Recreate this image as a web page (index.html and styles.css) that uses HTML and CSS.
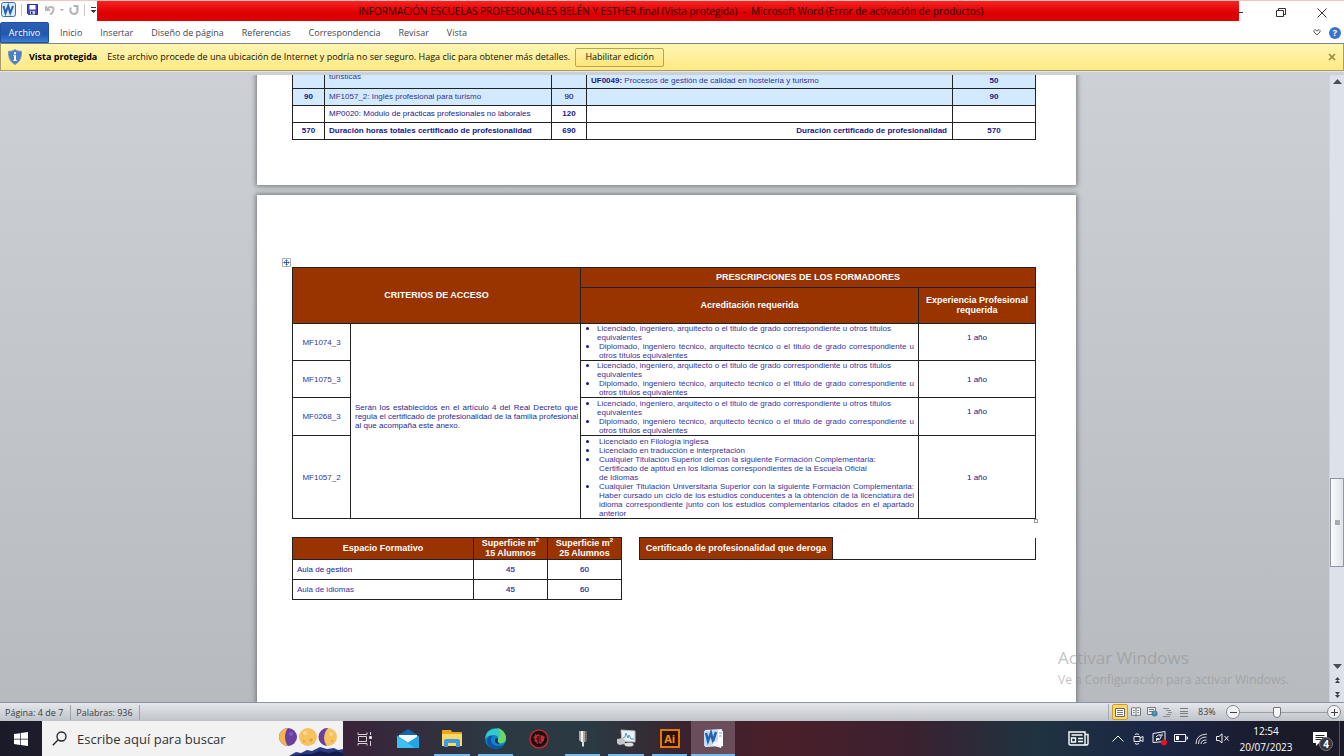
FILE: index.html
```html
<!DOCTYPE html>
<html lang="es">
<head>
<meta charset="utf-8">
<meta name="viewport" content="width=device-width, initial-scale=1">
<title>INFORMACIÓN ESCUELAS PROFESIONALES BELÉN Y ESTHER.final - Microsoft Word</title>
<link rel="stylesheet" href="styles.css">
</head>
<body>
<div class="app">
  <header class="titlebar">
    <div class="quick">
      <svg class="word-logo" width="15" height="15" viewBox="0 0 15 15"><rect x=".5" y=".5" width="14" height="14" rx="2" fill="#dcebfa" stroke="#3c6fb5"/><path d="M2.500 4l2 7 2.700-7 2 7L12 4" fill="none" stroke="#1f5fb4" stroke-width="2"/></svg>
      <i class="vsep"></i>
      <button class="icon-btn" aria-label="Guardar"><svg width="11" height="11" viewBox="0 0 11 11"><path d="M.5.5h10v10h-9l-1-1z" fill="#4a4ac0" stroke="#28289a"/><path d="M2.500 1h6v4.500h-6z" fill="#fff"/><path d="M3 7h5v3.500H3z" fill="#c8d0ee"/><path d="M4 7.500h1.500v2.500H4z" fill="#222280"/></svg></button>
      <button class="icon-btn undo" aria-label="Deshacer"><svg width="10" height="10" viewBox="0 0 10 10" fill="none" stroke="#b4b7bc" stroke-width="2"><path d="M1 1v4h4M1.500 4.500C4 1 9 1 8.500 5 8.300 7 7 8.500 5 9.500"/></svg></button>
      <i class="caret"></i>
      <button class="icon-btn redo" aria-label="Rehacer"><svg width="10" height="10" viewBox="0 0 10 10" fill="none" stroke="#b0b3b8" stroke-width="2"><path d="M2 2.500C.5 5 1.500 9 5 9s4.500-4 2.500-6.500M4.500 1h4v3"/></svg></button>
      <i class="vsep"></i>
      <svg width="7" height="8" viewBox="0 0 7 8"><path d="M1 1h5v1H1zM.5 4h6l-3 3z" fill="#333"/></svg>
    </div>
    <h1 class="title">INFORMACIÓN ESCUELAS PROFESIONALES BELÉN Y ESTHER.final (Vista protegida)&nbsp; -&nbsp; Microsoft Word (Error de activación de productos)</h1>
    <div class="window-buttons">
      <button class="min" aria-label="Minimizar"><svg width="4" height="10" viewBox="0 0 4 10"><path d="M0 4.500h4" stroke="#333"/></svg></button>
      <button aria-label="Restaurar"><svg width="10" height="10" viewBox="0 0 10 10" fill="none" stroke="#333"><path d="M.5 2.500h7v6h-7zM2.500 2V.500h7v6H8"/></svg></button>
      <button aria-label="Cerrar"><svg width="10" height="10" viewBox="0 0 10 10" stroke="#333"><path d="M.5.5l9 9M9.500.5l-9 9"/></svg></button>
    </div>
  </header>

  <nav class="ribbon">
    <button class="tab file">Archivo</button>
    <button class="tab">Inicio</button>
    <button class="tab">Insertar</button>
    <button class="tab">Diseño de página</button>
    <button class="tab">Referencias</button>
    <button class="tab">Correspondencia</button>
    <button class="tab">Revisar</button>
    <button class="tab">Vista</button>
    <div class="ribbon-end">
      <button class="icon-btn" aria-label="Expandir la cinta"><svg width="8" height="7" viewBox="0 0 8 7" fill="#fff" stroke="#5a6068"><path d="M1 1.500l1-1 2 1.500 2-1.500 1 1v1.500L4 6 1 3z"/></svg></button>
      <button class="help" aria-label="Ayuda">?</button>
    </div>
  </nav>

  <section class="protected">
    <svg width="14" height="16" viewBox="0 0 14 16"><path d="M7 .5C9 2 11 2.300 13.500 2.300 13.800 8 12 13 7 15.500 2 13 .2 8 .5 2.300 3 2.300 5 2 7 .5z" fill="#4a80c4" stroke="#7e97b8"/><path d="M6 3.200h2v2H6zM5.200 6.200H8v5h1V12H5v-.8h1V7h-.8z" fill="#fff"/></svg>
    <strong>Vista protegida</strong>
    <span>Este archivo procede de una ubicación de Internet y podría no ser seguro. Haga clic para obtener más detalles.</span>
    <button class="enable">Habilitar edición</button>
    <button class="icon-btn dismiss" aria-label="Cerrar aviso"><svg width="8" height="8" viewBox="0 0 8 8" stroke="#96893c" stroke-width="1.600"><path d="M1 1l6 6M7 1L1 7"/></svg></button>
  </section>

  <div class="workspace">
    <main class="canvas">
      <article class="page first">
        <table class="grid hours">
          <colgroup><col class="h1"><col class="h2"><col class="h3"><col class="h4"><col class="h5"></colgroup>
          <tr class="blue clipped"><td></td><td class="l low">turísticas</td><td></td><td class="l low"><b>UF0049:</b> Procesos de gestión de calidad en hostelería y turismo</td><td class="low"><b>50</b></td></tr>
          <tr class="blue"><td><b>90</b></td><td class="l">MF1057_2: Inglés profesional para turismo</td><td class="semi">90</td><td></td><td><b>90</b></td></tr>
          <tr><td></td><td class="l dark">MP0020: Módulo de prácticas profesionales no laborales</td><td><b>120</b></td><td></td><td></td></tr>
          <tr><td><b>570</b></td><td class="l"><b>Duración horas totales certificado de profesionalidad</b></td><td><b>690</b></td><td class="r"><b>Duración certificado de profesionalidad</b></td><td><b>570</b></td></tr>
        </table>
      </article>

      <article class="page second">
        <div class="criteria-wrap">
          <svg class="move" width="9" height="9" viewBox="0 0 9 9"><path d="M.5.5h8v8h-8z" fill="#fff" stroke="#a8adb8"/><path d="M4.500 1.500v6M1.500 4.500h6M3.500 2.500h2M3.500 6.500h2M2.500 3.500v2M6.500 3.500v2" stroke="#3a5fb0"/></svg>
          <table class="grid criteria">
            <colgroup><col class="c1"><col class="c2"><col class="c3"><col class="c4"></colgroup>
            <tr class="head-a"><th colspan="2" rowspan="2">CRITERIOS DE ACCESO</th><th colspan="2">PRESCRIPCIONES DE LOS FORMADORES</th></tr>
            <tr class="head-b"><th>Acreditación requerida</th><th>Experiencia Profesional requerida</th></tr>
            <tr class="module"><td>MF1074_3</td>
              <td rowspan="4" class="access"><p class="wide">Serán los establecidos en el artículo 4 del Real Decreto que</p><p class="wide">regula el certificado de profesionalidad de la familia profesional</p><p>al que acompaña este anexo.</p></td>
              <td class="reqs"><ul><li class="near"><p class="mid">Licenciado, ingeniero, arquitecto o el titulo de grado correspondiente u otros títulos</p><p>equivalentes</p></li><li><p class="wide">Diplomado, ingeniero técnico, arquitecto técnico o el titulo de grado correspondiente u</p><p>otros títulos equivalentes</p></li></ul></td>
              <td class="years up">1 año</td></tr>
            <tr class="module"><td>MF1075_3</td>
              <td class="reqs"><ul><li class="near"><p class="mid">Licenciado, ingeniero, arquitecto o el titulo de grado correspondiente u otros títulos</p><p>equivalentes</p></li><li><p class="wide">Diplomado, ingeniero técnico, arquitecto técnico o el titulo de grado correspondiente u</p><p>otros títulos equivalentes</p></li></ul></td>
              <td class="years">1 año</td></tr>
            <tr class="module third"><td>MF0268_3</td>
              <td class="reqs"><ul><li class="near"><p class="mid">Licenciado, ingeniero, arquitecto o el titulo de grado correspondiente u otros títulos</p><p>equivalentes</p></li><li><p class="wide">Diplomado, ingeniero técnico, arquitecto técnico o el titulo de grado correspondiente u</p><p>otros títulos equivalentes</p></li></ul></td>
              <td class="years up">1 año</td></tr>
            <tr class="module last"><td>MF1057_2</td>
              <td class="reqs"><ul><li><p>Licenciado en Filología inglesa</p></li><li><p>Licenciado en traducción e interpretación</p></li><li><p>Cualquier Titulación Superior del con la siguiente Formación Complementaria:</p><p>Certificado de aptitud en los Idiomas correspondientes de la Escuela Oficial</p><p>de Idiomas</p></li><li><p class="wide">Cualquier Titulación Universitaria Superior con la siguiente Formación Complementaria:</p><p class="wide">Haber cursado un ciclo de los estudios conducentes a la obtención de la licenciatura del</p><p class="wide">idioma correspondiente junto con los estudios complementarios citados en el apartado</p><p>anterior</p></li></ul></td>
              <td class="years">1 año</td></tr>
          </table>
          <i class="resize"></i>
        </div>
        <div class="lower">
          <table class="grid rooms">
            <colgroup><col class="r1"><col class="r2"><col class="r3"></colgroup>
            <tr class="room-head"><th>Espacio Formativo</th><th>Superficie m<sup>2</sup><br>15 Alumnos</th><th>Superficie m<sup>2</sup><br>25 Alumnos</th></tr>
            <tr><td class="l strong">Aula de gestión</td><td class="semi">45</td><td class="semi">60</td></tr>
            <tr><td class="l">Aula de idiomas</td><td class="semi">45</td><td class="semi">60</td></tr>
          </table>
          <table class="grid repeal">
            <colgroup><col class="p1"><col class="p2"></colgroup>
            <tr class="room-head"><th>Certificado de profesionalidad que deroga</th><td class="blank"></td></tr>
          </table>
        </div>
      </article>
    </main>
    <aside class="scrollbar">
      <button aria-label="Subir"><svg width="9" height="5" viewBox="0 0 9 5"><path d="M0 5h9L4.500 0z" fill="#4a4f57"/></svg></button>
      <div class="track"><div class="space-above"></div><div class="thumb"><i></i></div><div class="space-below"></div></div>
      <button aria-label="Bajar"><svg width="9" height="5" viewBox="0 0 9 5"><path d="M0 0h9L4.500 5z" fill="#4a4f57"/></svg></button>
      <button class="jump" aria-label="Página anterior"><svg width="5" height="6" viewBox="0 0 5 6"><path d="M0 3h5L2.500 0zM0 6h5L2.500 3z" fill="#3c4048"/></svg></button>
      <button class="jump" aria-label="Página siguiente"><svg width="5" height="6" viewBox="0 0 5 6"><path d="M0 0h5L2.500 3zM0 3h5L2.500 6z" fill="#3c4048"/></svg></button>
    </aside>
    <div class="watermark"><p class="big">Activar Windows</p><p>Ve a Configuración para activar Windows.</p></div>
  </div>

  <footer class="status">
    <span class="stat page-count">Página: 4 de 7</span>
    <span class="stat">Palabras: 936</span>
    <div class="views">
      <button class="on" aria-label="Diseño de impresión"><svg width="10" height="9" viewBox="0 0 10 9"><path d="M.5.5h9v8h-9z" fill="#fff" stroke="#666"/><path d="M2 2.500h6M2 4.500h6M2 6.500h6" stroke="#777"/></svg></button>
      <button aria-label="Lectura"><svg width="10" height="10" viewBox="0 0 10 10" fill="#f4f5f6" stroke="#70757b"><path d="M5 1.500C4 .5 2 .5.500 1v7.500c1.500-.5 3-.5 4.500.5 1.500-1 3-1 4.500-.5V1C8 .5 6 .5 5 1.500V9M2 3.500h1.500M2 5.500h1.500M6.500 3.500H8M6.500 5.500H8"/></svg></button>
      <button aria-label="Diseño web"><svg width="11" height="10" viewBox="0 0 11 10"><path d="M.5.5h8v7h-8z" fill="#eee" stroke="#777"/><path d="M2 2.500h5M2 4.500h4" stroke="#777"/><circle cx="7.500" cy="6.500" r="3" fill="#3b7fb8"/><path d="M6 6l2-2 1 2-2 2z" fill="#58b368"/></svg></button>
      <button aria-label="Esquema"><svg width="10" height="9" viewBox="0 0 10 9" stroke="#8a8f95" fill="none"><path d="M0 .5h6M3 2.500h5M5 4.500h4M3 6.500h5M0 8.500h7"/></svg></button>
      <button aria-label="Borrador"><svg width="10" height="9" viewBox="0 0 10 9" stroke="#777c82"><path d="M1 .5h8M1 3.500h8M1 5.500h8M1 8.500h8"/></svg></button>
    </div>
    <span class="percent">83%</span>
    <button class="round" aria-label="Alejar"><svg width="7" height="7" viewBox="0 0 7 7" stroke="#444"><path d="M0 3.500h7"/></svg></button>
    <input class="zoom" type="range" min="0" max="100" value="42" aria-label="Zoom">
    <button class="round" aria-label="Acercar"><svg width="7" height="7" viewBox="0 0 7 7" stroke="#444"><path d="M0 3.500h7M3.500 0v7"/></svg></button>
  </footer>

  <div class="taskbar">
    <button class="start" aria-label="Inicio de Windows"><svg width="14" height="14" viewBox="0 0 14 14" fill="#fff"><path d="M0 2l6-.8v5.500H0zM6.700 1.100L14 0v6.700H6.700zM0 7.400h6v5.500L0 12zM6.700 7.400H14V14l-7.300-1z"/></svg></button>
    <div class="search">
      <svg width="15" height="15" viewBox="0 0 15 15" fill="none" stroke="#222" stroke-width="1.300"><circle cx="9.500" cy="5.500" r="4.500"/><path d="M6.200 8.800L.8 14.200"/></svg>
      <input type="text" placeholder="Escribe aquí para buscar" aria-label="Escribe aquí para buscar">
      <svg class="moons" width="64" height="34" viewBox="0 0 64 34">
        <circle cx="9" cy="15" r="9" fill="#6a3fa0"/><path d="M9 6a9 9 0 0 0 0 18C5 19 5 11 9 6z" fill="#f3b451"/><circle cx="12" cy="12" r="2" fill="#8458bb"/>
        <circle cx="29" cy="15" r="9" fill="#f6c25d"/><circle cx="26" cy="11" r="2" fill="#fbdc8c"/><circle cx="32" cy="18" r="1.500" fill="#df9d40"/><circle cx="25" cy="19" r="1" fill="#df9d40"/>
        <circle cx="49" cy="15" r="9" fill="#f6c25d"/><path d="M49 6a9 9 0 0 0-1 18c-3-4-5-11 1-18z" fill="#6a3fa0"/><circle cx="52" cy="12" r="2" fill="#fbdc8c"/><circle cx="53" cy="19" r="1" fill="#df9d40"/>
        <path d="M10 34l7-4 5 1 6-3 5 1 8-4 7 2 7-1 4 2 5-1v7z" fill="#2b3c86"/><path d="M13 34l12-2 7 0 9-3 9 2 7-2 7 2v3z" fill="#141c4e"/>
      </svg>
    </div>
    <nav class="apps">
      <button aria-label="Vista de tareas"><svg width="16" height="14" viewBox="0 0 16 14" fill="none" stroke="#d8d0d6"><path d="M1 .5v2h9v-2M1.500 4.500h8v5h-8zM1 13.500v-2h9v2M13.500 0v3M13.500 9v5"/><path d="M12.500 4.500h2v2h-2z" fill="#fff"/></svg></button>
      <button aria-label="Correo"><svg width="22" height="19" viewBox="0 0 22 19"><path d="M0 7L11 0l11 7v3H0z" fill="#1565a9"/><path d="M2 6h18v8H2z" fill="#f4f6f8"/><path d="M0 6.500l11 7 11-7V19H0z" fill="#24a5e6"/><path d="M0 19V7l18 12z" fill="#3cc0f5"/></svg></button>
      <button class="open" aria-label="Explorador"><svg width="20" height="17" viewBox="0 0 20 17"><path d="M0 1q0-1 1-1h8l1 2h9q1 0 1 1v12H0z" fill="#e8a51e"/><path d="M0 4h20v12H0z" fill="#ffd766"/><path d="M2 17v-6q0-2 2-2h12q2 0 2 2v6h-4v-4H6v4z" fill="#3f9be0"/></svg></button>
      <button class="open" aria-label="Edge"><svg width="21" height="21" viewBox="0 0 21 21"><circle cx="10.500" cy="10.500" r="10.500" fill="#1580d0"/><path d="M.5 9C2-1 18-3 21 9c1 5-3 7-7 6-2-.5-2-1.500-1-3 1.500-3-1-5-4-5-4 0-7 1-8.500 4z" fill="#36c8c6"/><path d="M12 0c6 1 9 6 9 11-1 4-4 5-7 4-2-.6-2-2-1-3 1-4 5-7-1-12z" fill="#6bd66b"/><path d="M8 8c-4 3-2 10 5 10 3 0 5-1 6-2-5 8-17 5-17-3 0-4 3-6 6-5z" fill="#0d559f"/><path d="M13 12c-1 2 0 3 2 3l-2 1c-3-1-4-4-2-6 2 0 2 1 2 2z" fill="#17364a"/></svg></button>
      <button aria-label="Driver"><svg width="20" height="20" viewBox="0 0 20 20"><circle cx="10" cy="10" r="9" fill="#171116" stroke="#bd272d" stroke-width="1.500"/><path d="M4 8l2-1V5l2 1 2-1 1 2 2-1 3 2-1 2v2l-2 1-1 2-2-1-2 1-1-2-2-1 1-2z" fill="#c5282e"/><path d="M8 8h4M7 10h5M9 12h3M9 7v7" stroke="#241116"/></svg></button>
      <button class="open" aria-label="Plotter"><svg width="10" height="18" viewBox="0 0 10 18"><path d="M1 1h8v9L7 12H3L1 10z" fill="#aaa9a6"/><path d="M3 1h2v11H3z" fill="#f2f2ef"/><path d="M7 1h2v9L7 12z" fill="#686a6a"/><path d="M4 12h2v4l-1 1-1-1z" fill="#ddd"/></svg></button>
      <button class="open" aria-label="Monitor"><svg width="20" height="19" viewBox="0 0 20 19"><path d="M5 1l14 1v11L6 12z" fill="#edf1f3" stroke="#b7bec3"/><path d="M7 9l2-1 1-4 2 5 1-3 2 4h3" fill="none" stroke="#4f9bc2"/><path d="M1 10l6-1 2 2v4l-6 1-2-2z" fill="#c5c8ca"/><ellipse cx="13" cy="15.500" rx="4.500" ry="2" fill="#dadddd"/></svg></button>
      <button class="open" aria-label="Illustrator"><span class="ai">Ai</span></button>
      <button class="open active" aria-label="Word"><svg width="21" height="20" viewBox="0 0 21 20"><path d="M2 1l17-1v17L2 18z" fill="#e3effb"/><path d="M14 1l6 1v15l-6 1z" fill="#fff"/><path d="M1 2l14-1v15L1 17z" fill="#c4dbf3"/><path d="M3 4l2 8 3-8 2 8 3-9" fill="none" stroke="#2563ae" stroke-width="2.500"/><path d="M10 13l10-2-2 8-9-3z" fill="#f5f8fc"/><path d="M16 4h3M16 7h3" stroke="#7aa8d8"/></svg></button>
    </nav>
    <div class="tray">
      <button class="news" aria-label="Noticias"><svg width="21" height="15" viewBox="0 0 21 15" fill="none" stroke="#fff" stroke-width="1.400"><path d="M1 1h16v13H2.500Q1 14 1 12.500zM17 3.500h3v9Q20 14 18.500 14H16M3.500 4h11M3.500 7h4v4h-4zM10 7.500h5M10 10.500h5"/></svg></button>
      <button aria-label="Mostrar iconos"><svg width="12" height="7" viewBox="0 0 12 7" fill="none" stroke="#fff"><path d="M.5 6.500L6 1l5.500 5.500"/></svg></button>
      <button aria-label="Reunirse"><svg width="11" height="12" viewBox="0 0 11 12" fill="none" stroke="#eee"><path d="M1 3.500h6v5H1zM7 5l3-1.500v5L7 7M2 1.500Q4 0 6 1.500M2 10.500q2 1.500 4 0"/></svg></button>
      <button aria-label="Actualización"><svg width="16" height="15" viewBox="0 0 16 15" fill="none" stroke="#eee"><path d="M1 2.500l12-2v10L1 11.500zM4 6q2-3 5-2M10 2.500V5H7.500M9 6q-1 4-4 2.500M4.500 10V7.500H7"/><circle cx="12" cy="11.500" r="3" fill="#e81123" stroke="none"/></svg></button>
      <button aria-label="Batería"><svg width="14" height="9" viewBox="0 0 14 9" fill="none" stroke="#eee"><path d="M.5.5h11v7H.5zM12 3h1.500v2H12"/><path d="M2 2h3v4H2z" fill="#fff" stroke="none"/></svg></button>
      <button aria-label="Red"><svg width="13" height="12" viewBox="0 0 13 12" fill="none" stroke="#ddd"><path d="M1 11Q1 1.500 12 1M3.500 11q0-7 8-7M6 11q0-4 5.500-4M8.500 11q0-1.500 3-1.500"/></svg></button>
      <button aria-label="Volumen"><svg width="14" height="11" viewBox="0 0 14 11" fill="none" stroke="#eee"><path d="M.5 3.500H3L6 .8v9L3 7.500H.5zM8.500 3l4 4.500M12.500 3l-4 4.500"/></svg></button>
      <time class="clock"><span>12:54</span><span>20/07/2023</span></time>
      <button class="notes" aria-label="Notificaciones"><svg width="16" height="16" viewBox="0 0 16 16"><path d="M1 1h14v11H7l-3 3v-3H1z" fill="#fff"/><path d="M3.500 4.500h9M3.500 6.500h9M3.500 8.500h6" stroke="#252532"/></svg><b class="badge">4</b></button>
      <i class="desktop-edge"></i>
    </div>
  </div>
</div>
</body>
</html>
```
FILE: styles.css
```css
* { box-sizing: border-box; }
body { margin: 0; font: 11px/14px "Open Sans", "Noto Sans", sans-serif; color: #222; }
button { margin: 0; padding: 0; border: 0; background: none; font: inherit; color: inherit; display: flex; align-items: center; justify-content: center; }
p, h1, ul { margin: 0; padding: 0; }
svg { display: block; flex: none; }
.app { display: flex; flex-direction: column; height: 100vh; min-height: 480px; overflow: hidden; background: #fff; }

/* Title bar */
.titlebar { display: flex; height: 22px; flex: none; border-top: 1px solid #f3c4c0; }
.quick { display: flex; align-items: center; gap: 5px; width: 97px; height: 17px; padding-left: 1px; }
.vsep { width: 1px; height: 12px; background: #c8c8cc; }
.icon-btn.undo { margin-left: 2px; }
.caret { border: 2px solid transparent; border-top-color: #aaa; border-bottom: 0; }
.title { flex: 1; height: 20px; padding-left: 6px; background: linear-gradient(#fb2222, #dc0000 60%, #e00000); color: #2e0000; font-size: 10px; line-height: 20px; font-weight: 400; text-align: center; white-space: nowrap; overflow: hidden; }
.window-buttons { display: flex; width: 105px; height: 22px; padding-top: 2px; }
.window-buttons button { width: 41px; }
.window-buttons .min { width: 21px; justify-content: flex-start; }

/* Ribbon */
.ribbon { display: flex; height: 21px; flex: none; font-size: 9px; color: #44474c; }
.tab { padding: 0 9px; white-space: nowrap; }
.file { width: 49px; margin-right: 2px; padding: 0; background: linear-gradient(#2a5fb8, #2458ad 60%, #3a7fd8); border: 1px solid #1f4f9f; border-radius: 2px 2px 0 0; color: #fff; }
.ribbon-end { display: flex; align-items: center; gap: 8px; margin-left: auto; padding-right: 3px; }
.help { width: 12px; height: 12px; border-radius: 50%; background: #3e74c8; color: #fff; font-size: 9px; line-height: 12px; font-weight: 700; }

/* Protected view notice */
.protected { display: flex; align-items: center; height: 28px; flex: none; padding: 0 7px; border: 1px solid #a89d68; border-top-color: #81837c; background: linear-gradient(#fff6b4, #ffe982); font-size: 9px; color: #111; white-space: nowrap; }
.protected strong { margin-left: 7px; color: #000; }
.protected span { margin-left: 10px; }
.enable { height: 19px; width: 89px; margin-left: 5px; border: 1px solid #b8a44d; border-radius: 2px; background: linear-gradient(#fff3a8, #ffe67a); }
.dismiss { margin-left: auto; }

/* Document area */
.workspace { position: relative; display: flex; flex: 1; min-height: 0; padding-top: 3px; border-top: 1px solid #e2e4e8; background: linear-gradient(#cdd0d4, #b7babe); }
.canvas { flex: 1; min-width: 0; overflow: hidden; padding-left: 4px; display: flex; flex-direction: column; align-items: center; gap: 10px; }
.page { width: 819px; max-width: 100%; flex: none; padding: 0 40px 0 35px; background: #fff; box-shadow: 0 0 5px 1px #6f757b; }
.first { margin-top: -11px; padding-bottom: 45px; }
.second { padding-top: 72px; padding-bottom: 120px; }

.grid { width: 100%; border-collapse: collapse; table-layout: fixed; font: 8px/9px "Liberation Sans", Arial, sans-serif; color: #34349c; text-align: center; }
.grid td, .grid th { padding: 0 4px; border: 1px solid #222; }
.grid th { padding-bottom: 2px; background: #993300; color: #fff; font-size: 9px; line-height: 10px; }
.grid b { color: #17178a; }
.grid .l { text-align: left; }
.grid .r { padding-right: 5px; text-align: right; }
.grid .dark, .grid .strong { color: #17178a; }
.grid .semi { color: #2a2a94; -webkit-text-stroke: 0.2px; }

.hours tr { height: 17px; }
.hours .clipped { height: 24px; }
.grid.hours td { padding-bottom: 2px; }
.grid.hours .low { vertical-align: bottom; padding-bottom: 3px; }
.grid.hours .clipped .l:nth-child(2) { padding-bottom: 7px; }
.blue td { background: #d3e9fe; }
.h1 { width: 32px; } .h2 { width: 227px; } .h3 { width: 35px; } .h5 { width: 83px; }

.criteria-wrap { position: relative; }
.move { position: absolute; left: -10px; top: -9px; }
.resize { position: absolute; right: -2px; bottom: -4px; width: 4px; height: 4px; border: 1px solid #999; background: #fff; }
.c1 { width: 58px; } .c2 { width: 230px; } .c4 { width: 117px; }
.head-a { height: 20px; } .head-b { height: 36px; }
.module { height: 37px; }
.module.third { height: 38px; }
.module.last { height: 83px; }
.criteria .reqs { padding: 0 4px; vertical-align: middle; text-align: left; }
.reqs ul { list-style: none; }
.reqs li { position: relative; padding-left: 14px; }
.reqs li.near { padding-left: 12px; }
.reqs li::before { content: ""; position: absolute; left: 1px; top: 3px; width: 3px; height: 3px; border-radius: 50%; background: #17178a; }
.grid p { white-space: nowrap; text-align: left; }
.grid p.wide, .grid p.mid { text-align: justify; text-align-last: justify; }
.grid p.mid { margin-right: 23px; }
.criteria .access { padding-left: 4px; padding-right: 2px; padding-bottom: 10px; color: #2a2a94; }
.criteria .years { color: #17178a; }
.criteria .years.up { padding-bottom: 10px; }

.lower { display: flex; align-items: flex-start; gap: 17px; margin-top: 18px; }
.lower .rooms { width: 330px; flex: none; }
.lower .repeal { flex: 1; width: auto; min-width: 0; }
.r1 { width: 181px; } .r2 { width: 74px; } .p1 { width: 193px; }
.rooms tr { height: 20px; }
.grid .room-head { height: 22px; }
.grid .room-head th { padding-bottom: 1px; }
.grid sup { font-size: 6px; line-height: 0; }
.grid .blank { border-top: 0; }

.watermark { position: absolute; left: calc(100% - 286px); bottom: 12px; color: rgb(140 143 146 / 55%); font-size: 12px; line-height: 20px; white-space: nowrap; }
.watermark .big { font-size: 17px; line-height: 24px; }

.scrollbar { display: flex; flex-direction: column; width: 15px; flex: none; background: #dde2ea; border-left: 1px solid #cfd4dc; }
.scrollbar button { height: 12px; flex: none; }
.scrollbar .jump { height: 15px; }
.track { display: flex; flex-direction: column; flex: 1; min-height: 0; }
.space-above { flex: 392; } .space-below { flex: 93; }
.thumb { display: flex; align-items: center; justify-content: center; flex: 87; border: 1px solid #9197a1; background: linear-gradient(90deg, #fafbfc, #dfe3ea); }
.thumb i { width: 5px; height: 5px; background: #a7acb4; }

/* Status bar */
.status { display: flex; align-items: center; height: 19px; flex: none; border-top: 1px solid #8b949e; background: linear-gradient(#e4e7eb, #bfc4ca); font-size: 9px; color: #3a3e44; white-space: nowrap; }
.stat { padding: 0 6px 0 5px; border-right: 1px solid #9da3aa; line-height: 15px; }
.page-count { padding-right: 7px; }
.views { display: flex; align-items: center; height: 16px; margin-left: auto; padding-left: 3px; border-left: 1px solid #a6abb1; }
.views button { width: 16px; height: 16px; }
.views .on { border: 1px solid #d29a27; border-radius: 2px; background: #ffd966; }
.percent { width: 34px; padding-left: 6px; }
.round { width: 14px; height: 14px; flex: none; border: 1px solid #85898f; border-radius: 50%; background: #f1f2f4; }
.zoom { appearance: none; width: 87px; height: 14px; margin: 0; background: linear-gradient(#9a9fa6, #9a9fa6) center / 100% 1px no-repeat; }
.zoom::-webkit-slider-thumb { appearance: none; width: 8px; height: 11px; border: 1px solid #70757b; border-radius: 1px 1px 4px 4px; background: #f8f8f8; }
.zoom + .round { margin-right: 3px; }

/* Taskbar */
.taskbar { display: flex; height: 35px; flex: none; background: linear-gradient(90deg, #1a1b29, #39233a 26%, #2b3a42 37%, #2b3a42 44%, #3a222e 51%, #4a1f2a 58%, #3a2130 68%, #1f3340 77%, #1b2545 86%, #1a1a28 96%); color: #fff; }
.start { width: 42px; }
.search { position: relative; display: flex; align-items: center; gap: 10px; width: 301px; padding-left: 10px; background: #f2f2f2; }
.search input { flex: 1; min-width: 0; border: 0; padding: 0; outline: 0; background: none; font: 13px/18px "Open Sans", sans-serif; color: #222; }
.search input::placeholder { color: #333; opacity: 1; }
.moons { align-self: flex-end; }
.apps { display: grid; grid-template-columns: repeat(9, 1fr); width: 392px; }
.apps button { position: relative; }
.apps .open::after { content: ""; position: absolute; left: 4px; right: 4px; bottom: 0; height: 2px; background: #76b9ed; }
.apps .active { background: #6b4d59; }
.apps .active::after { left: 0; right: 0; }
.ai { width: 20px; height: 19px; border: 2px solid #e5760b; background: #2b1404; color: #ff8a18; font: 700 11px/15px "Open Sans", sans-serif; }
.tray { display: flex; margin-left: auto; }
.tray button { width: 21px; }
.tray .news { width: 37px; margin-right: 10px; }
.clock { display: flex; flex-direction: column; justify-content: center; width: 68px; padding-right: 2px; text-align: center; font-size: 10px; line-height: 16px; }
.tray .notes { position: relative; width: 38px; }
.badge { position: absolute; left: 18px; bottom: 5px; width: 14px; height: 14px; border: 1px solid #777; border-radius: 50%; background: #35353f; font-size: 10px; line-height: 12px; }
.desktop-edge { width: 5px; border-left: 1px solid #55555f; }
```
